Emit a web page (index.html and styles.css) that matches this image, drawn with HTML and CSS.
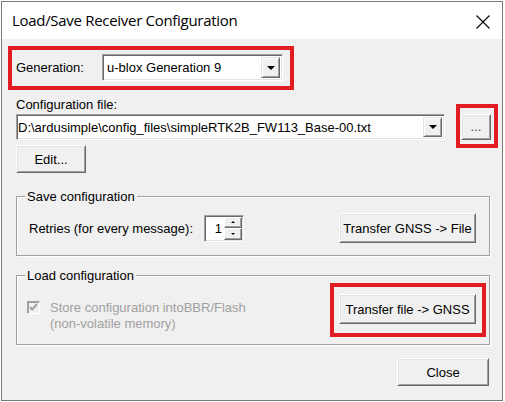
FILE: index.html
```html
<!DOCTYPE html>
<html>
<head>
<meta charset="utf-8">
<link rel="stylesheet" href="styles.css">
</head>
<body>
<div class="window">
  <div class="titlebar">
    <span class="title">Load/Save Receiver Configuration</span>
    <svg class="close-x" width="14" height="14" viewBox="0 0 14 14"><path d="M0.5 0.5 L13.5 13.5 M13.5 0.5 L0.5 13.5" stroke="#000" stroke-width="1.1" fill="none"/></svg>
  </div>
  <div class="content">
    <div class="gen-row mark mark-gen">
      <span class="gen-label">Generation:</span>
      <div class="combo gen-combo">
        <span class="combo-text">u-blox Generation 9</span>
        <span class="drop"><i class="arrow"></i></span>
      </div>
    </div>
    <div class="cfg-label">Configuration file:</div>
    <div class="file-row">
      <div class="combo file-combo">
        <span class="combo-text file-text">D:\ardusimple\config_files\simpleRTK2B_FW113_Base-00.txt</span>
        <span class="drop"><i class="arrow"></i></span>
      </div>
      <button class="btn browse mark mark-browse">...</button>
    </div>
    <button class="btn edit">Edit...</button>

    <div class="group save-group">
      <div class="legend">Save configuration</div>
      <div class="group-row save-row">
        <span class="retries">Retries (for every message):</span>
        <div class="spin">
          <span class="spin-val">1</span>
          <div class="spin-btns">
            <span class="sb"><i class="tri-up"></i></span>
            <span class="sb"><i class="tri-down"></i></span>
          </div>
        </div>
        <button class="btn transfer">Transfer GNSS -&gt; File</button>
      </div>
    </div>

    <div class="group load-group">
      <div class="legend">Load configuration</div>
      <div class="group-row load-row">
        <div class="check-wrap">
          <span class="checkbox">
            <svg width="11" height="11" viewBox="0 0 11 11"><path d="M2 5 L4.2 7.4 L9 2.2" stroke="#a0a0a0" stroke-width="2" fill="none"/></svg>
          </span>
          <span class="check-label">Store configuration intoBBR/Flash<br>(non-volatile memory)</span>
        </div>
        <button class="btn transfer mark mark-load">Transfer file -&gt; GNSS</button>
      </div>
    </div>

    <div class="footer">
      <button class="btn close">Close</button>
    </div>
  </div>
</div>
</body>
</html>
```

FILE: styles.css
```css
* { box-sizing: border-box; }
html, body { margin: 0; padding: 0; background: #ffffff; }
body {
  font-family: "Liberation Sans", Arial, sans-serif;
  font-size: 13px;
  color: #000;
}
.window {
  margin: 1px 0 0 1px;
  width: 502px;
  height: 400px;
  border: 1px solid #7a7a7a;
  display: flex;
  flex-direction: column;
}
.titlebar {
  height: 37px;
  background: #ffffff;
  display: flex;
  align-items: center;
  padding-left: 10px;
}
.title {
  font-family: "Open Sans", "Noto Sans", sans-serif;
  font-size: 15px;
  letter-spacing: -0.3px;
  color: #000;
  margin-top: -1px;
}
.close-x {
  margin-left: auto;
  margin-right: 12px;
  align-self: flex-start;
  margin-top: 13px;
}
.content {
  flex: 1;
  background: #f0f0f0;
  padding: 15px 12px 0 14px;
  display: flex;
  flex-direction: column;
  align-items: flex-start;
}
.mark { position: relative; }
.mark::after {
  content: "";
  position: absolute;
  border: 4px solid #e31b23;
  pointer-events: none;
}
.mark-gen::after { left: -8px; top: -8px; right: -11px; bottom: -9px; }
.mark-browse::after { left: -6px; top: -11px; right: -8px; bottom: -9px; }
.mark-load::after { left: -10px; top: -12px; right: -11px; bottom: -14px; }

.gen-row {
  display: flex;
  align-items: center;
  height: 27px;
}
.gen-label { width: 86px; }
.combo {
  height: 27px;
  background: #fff;
  display: flex;
  align-items: center;
  border-top: 1px solid #a0a0a0;
  border-left: 1px solid #a0a0a0;
  border-right: 1px solid #fff;
  border-bottom: 1px solid #fff;
  box-shadow: inset 1px 1px 0 #696969, inset -1px -1px 0 #e3e3e3;
  padding: 2px 2px 2px 4px;
}
.gen-combo { width: 181px; }
.combo-text { flex: 1; white-space: nowrap; overflow: hidden; }
.drop {
  width: 19px;
  height: 100%;
  background: #f0f0f0;
  border-top: 1px solid #e3e3e3;
  border-left: 1px solid #e3e3e3;
  border-right: 1px solid #696969;
  border-bottom: 1px solid #696969;
  box-shadow: inset 1px 1px 0 #fff, inset -1px -1px 0 #a0a0a0;
  display: flex;
  align-items: center;
  justify-content: center;
}
.arrow {
  width: 0; height: 0;
  border-left: 4px solid transparent;
  border-right: 4px solid transparent;
  border-top: 4px solid #000;
}
.cfg-label {
  margin-top: 16px;
  line-height: 15px;
}
.file-row {
  margin-top: 2px;
  display: flex;
  gap: 16px;
  height: 26px;
}
.file-combo { width: 429px; height: 26px; padding-left: 1px; flex-shrink: 0; }
.btn {
  font-family: "Liberation Sans", Arial, sans-serif;
  font-size: 13px;
  color: #000;
  background: #f0f0f0;
  padding: 0;
  margin: 0;
  border-top: 1px solid #fff;
  border-left: 1px solid #fff;
  border-right: 1px solid #696969;
  border-bottom: 1px solid #696969;
  box-shadow: inset 1px 1px 0 #e3e3e3, inset -1px -1px 0 #a0a0a0;
  flex-shrink: 0;
}
.browse { width: 30px; height: 26px; color: #444; line-height: 14px; }
.edit { margin-top: 5px; width: 70px; height: 28px; }
.group {
  width: 474px;
  border: 1px solid #a0a0a0;
  box-shadow: inset 1px 1px 0 #fff, 1px 1px 0 #fff;
  display: flex;
  flex-direction: column;
  align-items: flex-start;
}
.save-group { margin-top: 23px; padding: 0 13px 12px 12px; }
.load-group { margin-top: 19px; padding: 0 13px 12px 12px; }
.legend {
  margin-top: -8px;
  margin-left: -4px;
  padding: 0 2px;
  background: #f0f0f0;
  line-height: 15px;
}
.group-row {
  width: 100%;
  display: flex;
}
.save-row { margin-top: 9px; align-items: center; height: 30px; }
.load-row { margin-top: 11px; align-items: flex-start; }
.retries { margin-right: 11px; }
.spin {
  width: 40px;
  height: 27px;
  background: #fff;
  border-top: 1px solid #a0a0a0;
  border-left: 1px solid #a0a0a0;
  border-right: 1px solid #fff;
  border-bottom: 1px solid #fff;
  box-shadow: inset 1px 1px 0 #696969, inset -1px -1px 0 #e3e3e3;
  display: flex;
  padding: 1px 1px 1px 2px;
}
.spin-val {
  flex: 1;
  text-align: right;
  padding-right: 2px;
  line-height: 23px;
}
.spin-btns {
  width: 18px;
  display: flex;
  flex-direction: column;
}
.sb {
  flex: 1;
  background: #f0f0f0;
  border-top: 1px solid #fff;
  border-left: 1px solid #fff;
  border-right: 1px solid #696969;
  border-bottom: 1px solid #696969;
  box-shadow: inset -1px -1px 0 #a0a0a0;
  display: flex;
  align-items: center;
  justify-content: center;
}
.tri-up, .tri-down {
  width: 0; height: 0;
  border-left: 2px solid transparent;
  border-right: 2px solid transparent;
}
.tri-up { border-bottom: 2px solid #000; }
.tri-down { border-top: 2px solid #000; }
.transfer { margin-left: auto; width: 137px; height: 30px; }
.check-wrap {
  display: flex;
  align-items: flex-start;
  margin-top: 6px;
  margin-left: -2px;
  color: #a0a0a0;
}
.checkbox {
  width: 13px;
  height: 13px;
  margin-top: 1px;
  margin-right: 10px;
  background: #f0f0f0;
  border-top: 1px solid #a0a0a0;
  border-left: 1px solid #a0a0a0;
  border-right: 1px solid #fff;
  border-bottom: 1px solid #fff;
  box-shadow: inset 1px 1px 0 #a0a0a0;
  display: flex;
  align-items: center;
  justify-content: center;
}
.check-label { line-height: 16px; }
.footer {
  width: 100%;
  display: flex;
  justify-content: flex-end;
  padding-right: 1px;
  margin-top: 13px;
}
.close { width: 92px; height: 28px; }
```
